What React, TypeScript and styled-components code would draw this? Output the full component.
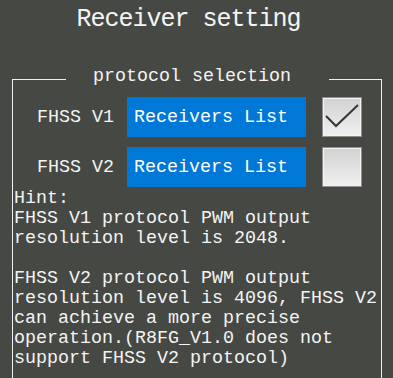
import * as React from 'react'
import styled, { createGlobalStyle } from 'styled-components'

const GlobalStyle = createGlobalStyle`
  html, body {
    margin: 0;
    padding: 0;
    background: #464844;
    overflow: hidden;
  }
  body {
    font-family: "Liberation Mono", "DejaVu Sans Mono", monospace;
    color: #ffffff;
  }
`

const SPage = styled.div`
  width: 393px;
  height: 378px;
  overflow: hidden;
`
const STitle = styled.div`
  padding: 2px 16px 0 0;
  height: 36px;
  line-height: 36px;
  font-size: 25px;
  letter-spacing: -1px;
  text-align: center;
  color: #f4f4f4;
`
const SFrame = styled.fieldset`
  margin: 29px 11px 0 12px;
  padding: 0 0 40px 1px;
  border: 1px solid #f0f0f0;
  border-bottom: none;
  min-width: 0;
`
const SLegend = styled.legend`
  margin-left: 52px;
  padding: 0 38px 4px 27px;
  font-size: 18.33px;
  line-height: 20px;
  color: #f4f4f4;
`
const SRows = styled.div`
  display: flex;
  flex-direction: column;
  gap: 10px;
  padding-top: 6px;
`
const SRow = styled.div`
  display: flex;
  align-items: center;
  height: 40px;
  padding-left: 23px;
`
const SLabel = styled.div`
  width: 77px;
  margin-right: 13px;
  font-size: 18.33px;
  white-space: pre;
  color: #f4f4f4;
`
const SListButton = styled.div`
  width: 179px;
  height: 40px;
  box-sizing: border-box;
  padding-left: 7px;
  display: flex;
  align-items: center;
  background: #0078d7;
  font-size: 18.33px;
  color: #ffffff;
`
const SCheck = styled.div`
  margin-left: 16px;
  width: 40px;
  height: 40px;
  box-sizing: border-box;
  border: 1px solid #8e8e8e;
  box-shadow: inset 0 0 0 1px #f4f4f4;
  background: linear-gradient(#d2d2d2, #f0f0f0);
  display: flex;
  align-items: center;
  justify-content: center;
`
const SHint = styled.div`
  margin-top: 2px;
  font-size: 18.33px;
  line-height: 20px;
  white-space: pre-wrap;
  color: #f4f4f4;
`

const CheckBox = ({ checked }: { checked: boolean }) => (
  <SCheck>
    {checked && (
      <svg width="38" height="38" viewBox="0 0 38 38">
        <polyline
          points="3,18 13,28 35,7"
          fill="none"
          stroke="#363636"
          strokeWidth="2"
        />
      </svg>
    )}
  </SCheck>
)

const protocols = [
  { name: 'FHSS V1', checked: true },
  { name: 'FHSS V2', checked: false }
]

const hint = `Hint:
FHSS V1 protocol PWM output
resolution level is 2048.

FHSS V2 protocol PWM output
resolution level is 4096, FHSS V2
can achieve a more precise
operation.(R8FG_V1.0 does not
support FHSS V2 protocol)`

const App = () => (
  <SPage>
    <GlobalStyle />
    <STitle>Receiver setting</STitle>
    <SFrame>
      <SLegend>protocol selection</SLegend>
      <SRows>
        {protocols.map(p => (
          <SRow key={p.name}>
            <SLabel>{p.name}</SLabel>
            <SListButton>Receivers List</SListButton>
            <CheckBox checked={p.checked} />
          </SRow>
        ))}
      </SRows>
      <SHint>{hint}</SHint>
    </SFrame>
  </SPage>
)

export default App
